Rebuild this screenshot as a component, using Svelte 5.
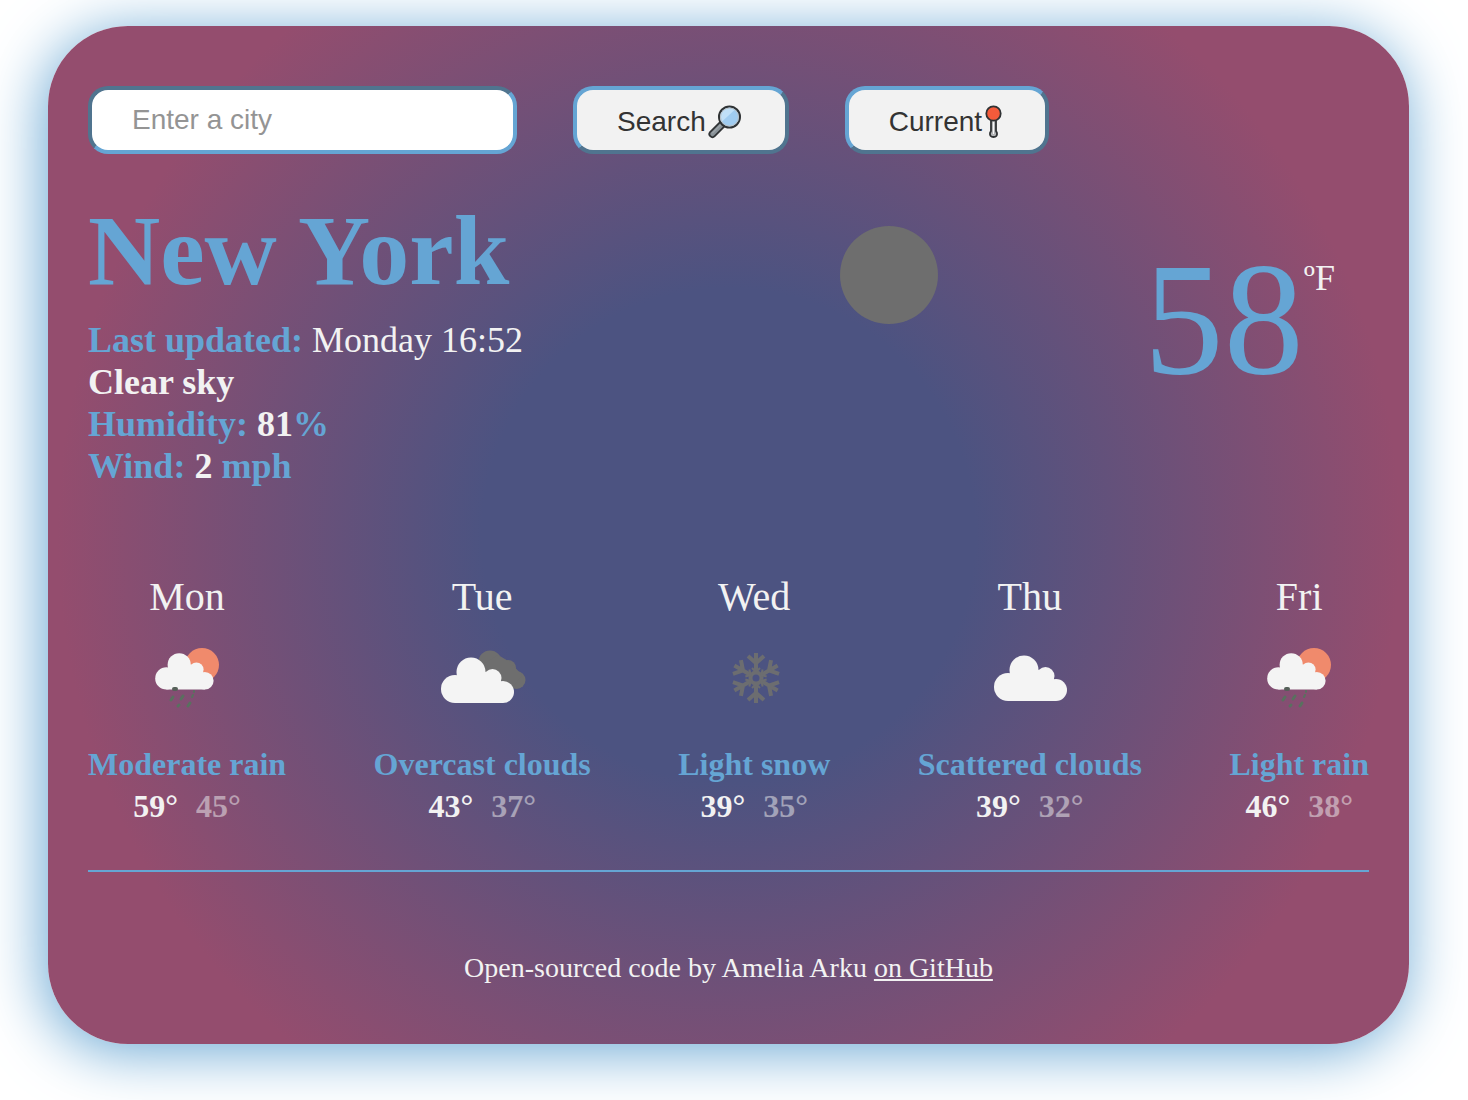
<script>
  let city = $state('');
  const details = [
    { label: 'Humidity:', value: '81', unit: '%' },
    { label: 'Wind:', value: '2', unit: ' mph' }
  ];
  const forecast = [
    { day: 'Mon', icon: 'rain', text: 'Moderate rain', high: 59, low: 45 },
    { day: 'Tue', icon: 'overcast', text: 'Overcast clouds', high: 43, low: 37 },
    { day: 'Wed', icon: 'snow', text: 'Light snow', high: 39, low: 35 },
    { day: 'Thu', icon: 'cloud', text: 'Scattered clouds', high: 39, low: 32 },
    { day: 'Fri', icon: 'rain', text: 'Light rain', high: 46, low: 38 }
  ];
  const arms = [0, 60, 120, 180, 240, 300];
</script>

{#snippet cloud(transform)}
  <g {transform} fill="#f4f4f4">
    <circle cx="28" cy="58" r="14" />
    <circle cx="44" cy="41" r="14.500" />
    <circle cx="65.500" cy="47" r="9" />
    <circle cx="76" cy="61" r="11" />
    <path d="M28 72 V50 L32 40 H56 L72 46 L76 54 V72 Z" />
  </g>
{/snippet}

<main class="card">
  <form class="search" onsubmit={(e) => e.preventDefault()}>
    <input type="text" placeholder="Enter a city" aria-label="City" bind:value={city} />
    <button type="submit">
      <span>Search</span>
      <svg class="lens" viewBox="0 0 36 34" aria-hidden="true">
        <path d="M5 29 L15 19" stroke="#2f3234" stroke-width="8" stroke-linecap="round" />
        <path d="M5 29 L15 19" stroke="#899298" stroke-width="4.500" stroke-linecap="round" />
        <path d="M5 28 L13 20" stroke="#aab1b5" stroke-width="1" stroke-linecap="round" />
        <circle cx="22" cy="12" r="10.500" fill="#a0ccf0" stroke="#2f3234" stroke-width="2" />
        <path d="M14 17 A9 9 0 0 1 27 5 Z" fill="#c0e0f8" />
        <circle cx="22" cy="12" r="9" fill="none" stroke="#b9c0c5" stroke-width="1" />
      </svg>
    </button>
    <button type="button">
      <span>Current</span>
      <svg class="pin" viewBox="0 0 18 34" aria-hidden="true">
        <path d="M6.500 16 V26 L5.500 28 Q5 32 9 32 Q13 32 12.500 28 L11.500 26 V16" fill="#b4b6b8" stroke="#2f3234" stroke-width="1.800" />
        <path d="M9 16 V29" stroke="#f8f8f8" stroke-width="1" />
        <circle cx="9" cy="8.500" r="7.200" fill="#f55b3b" stroke="#2f3234" stroke-width="1.800" />
      </svg>
    </button>
  </form>

  <section class="current">
    <div>
      <h1>New York</h1>
      <ul>
        <li><b>Last updated:</b> <span>Monday 16:52</span></li>
        <li><strong>Clear sky</strong></li>
        {#each details as d}
          <li><b>{d.label}</b> <strong>{d.value}</strong><b>{d.unit}</b></li>
        {/each}
      </ul>
    </div>
    <svg class="now" viewBox="0 0 100 100" role="img" aria-label="Clear sky">
      <circle cx="50" cy="50" r="24.500" fill="#6e6e6e" />
    </svg>
    <div class="temp"><span class="degrees">58</span><span class="unit">ºF</span></div>
  </section>

  <section class="forecast">
    {#each forecast as f}
      <article>
        <h2>{f.day}</h2>
        <svg viewBox="0 0 100 100" role="img" aria-label={f.text}>
          {#if f.icon === 'rain'}
            <circle cx="65" cy="36" r="17" fill="#f08a6c" />
            {@render cloud('translate(7 3) scale(0.8)')}
            <g stroke="#59705f" stroke-width="3" stroke-linecap="round">
              <path d="M36 68 L34 71 M46 67 L44 70 M53 74 L51 77 M42 76 L41 77" />
              <path d="M37 60 H39" stroke="#566059" stroke-width="4" />
              <path d="M57 62 V63 M56 66 L55 68" stroke-width="2" />
            </g>
          {:else if f.icon === 'overcast'}
            <g fill="#6e6e6e">
              <circle cx="58" cy="33" r="11.500" />
              <circle cx="76" cy="39" r="8" />
              <circle cx="84.500" cy="51" r="9" />
              <path d="M50 36 L66 26 L78 33 L90 46 L80 59 L60 46 Z" />
            </g>
            {@render cloud('translate(-5 2)')}
          {:else if f.icon === 'snow'}
            <g fill="none" stroke="#6c6d70" stroke-width="4">
              <circle cx="52" cy="49" r="5.500" />
              {#each arms as a}
                <path d="M52 43 V24 M44 27 L52 34 L60 27" transform="rotate({a} 52 49)" />
                <path d="M48 39 L52 43 L56 39" stroke-width="2" transform="rotate({a} 52 49)" />
              {/each}
            </g>
          {:else}
            {@render cloud('translate(0 0)')}
          {/if}
        </svg>
        <p class="desc">{f.text}</p>
        <p class="range"><span>{f.high}°</span><span class="low">{f.low}°</span></p>
      </article>
    {/each}
  </section>

  <hr />
  <footer>Open-sourced code by Amelia Arku <a href="#github">on GitHub</a></footer>
</main>

<style>
  :global(body) {
    margin: 0;
    background: #fff;
  }
  .card {
    margin: 26px 59px 56px 48px;
    padding: 60px 40px;
    border-radius: 80px;
    background: radial-gradient(circle, #4c5381 29%, #944d6e 79%);
    box-shadow: -4px 7px 60px #67a6d3;
    color: #f2f2f2;
    font-family: 'Liberation Serif', serif;
  }
  .search {
    display: flex;
    flex-wrap: wrap;
    gap: 56px;
  }
  input,
  button {
    box-sizing: border-box;
    height: 68px;
    padding: 0 40px;
    border: 4px solid;
    border-color: #50748f #65a5d4 #65a5d4 #50748f;
    border-radius: 20px;
    font: 28px 'Liberation Sans', sans-serif;
  }
  input {
    width: 429px;
    background: #fff;
    color: #333;
  }
  input::placeholder {
    color: #949494;
  }
  button {
    display: flex;
    align-items: center;
    padding-top: 3px;
    border-color: #65a5d4 #50748f #50748f #65a5d4;
    background: #f2f2f2;
    color: #333;
  }
  button svg {
    height: 34px;
    fill: none;
  }
  .lens {
    width: 39px;
  }
  .pin {
    width: 23px;
  }
  .current {
    display: grid;
    grid-template-columns: 13fr 200px 7fr;
    margin-top: 39px;
  }
  h1 {
    margin: 0;
    font-size: 100px;
    line-height: 116px;
    color: #65a5d4;
  }
  ul {
    margin: 10px 0 0;
    padding: 0;
    list-style: none;
    font-size: 36px;
    line-height: 42px;
  }
  b {
    color: #65a5d4;
    white-space: pre;
  }
  .now {
    width: 200px;
    height: 200px;
    margin: -18px 0 0 -2px;
  }
  .temp {
    display: flex;
    align-items: flex-start;
    justify-content: flex-end;
    padding: 34px 34px 0 0;
  }
  .degrees {
    font-size: 160px;
    line-height: 184px;
    color: #65a5d4;
  }
  .unit {
    font-size: 36px;
    line-height: 42px;
    margin-top: 30px;
  }
  .forecast {
    display: flex;
    justify-content: space-between;
    margin-top: 87px;
  }
  article {
    text-align: center;
  }
  h2 {
    margin: 0;
    font-size: 40px;
    font-weight: 400;
    line-height: 46px;
  }
  article svg {
    display: block;
    width: 100px;
    height: 100px;
    margin: 9px auto 14px;
  }
  p {
    margin: 0;
    font-size: 32px;
    font-weight: 700;
    line-height: 42px;
  }
  .desc {
    color: #65a5d4;
  }
  .range {
    display: flex;
    justify-content: center;
    gap: 18px;
  }
  .low {
    opacity: 0.5;
  }
  hr {
    margin: 43px 0 80px;
    border: 0;
    border-top: 2px solid #65a5d4;
  }
  footer {
    text-align: center;
    font-size: 28px;
    line-height: 32px;
  }
  a {
    color: inherit;
  }
</style>
